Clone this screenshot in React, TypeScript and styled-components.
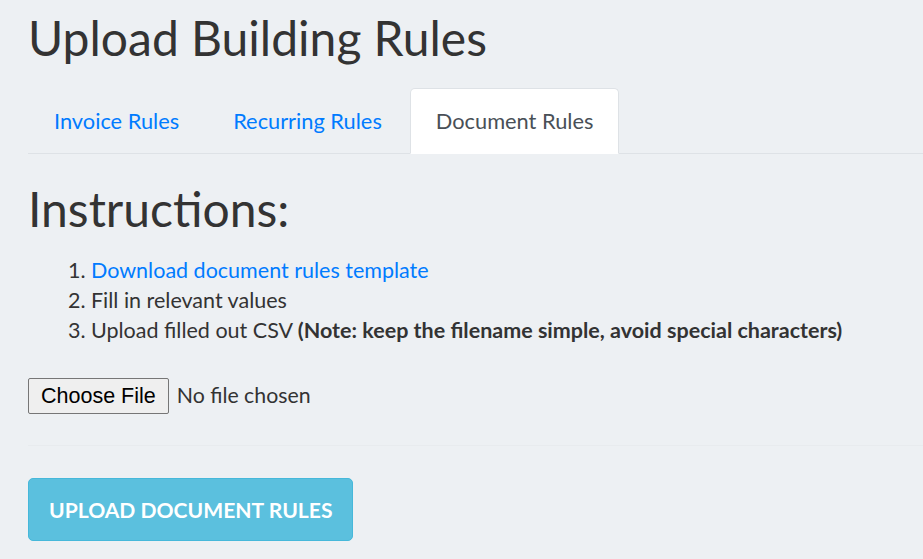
import styled, { createGlobalStyle } from 'styled-components'

const GlobalStyle = createGlobalStyle`
  html, body {
    margin: 0;
    padding: 0;
    background: #edf0f3;
  }
  body {
    font-family: Lato, "Open Sans", sans-serif;
    font-size: 21.5px;
    line-height: 30px;
    color: #333333;
  }
`

const tabs = ['Invoice Rules', 'Recurring Rules', 'Document Rules']

export default function App() {
  return (
    <>
      <GlobalStyle />
      <Page>
        <Title>Upload Building Rules</Title>
        <TabList>
          {tabs.map((label) => (
            <Tab key={label} $active={label === 'Document Rules'}>
              {label}
            </Tab>
          ))}
        </TabList>
        <Panel>
          <Heading>Instructions:</Heading>
          <Steps>
            <li>
              <Link href="#">Download document rules template</Link>
            </li>
            <li>Fill in relevant values</li>
            <li>
              Upload filled out CSV{' '}
              <strong>(Note: keep the filename simple, avoid special characters)</strong>
            </li>
          </Steps>
          <FileInput type="file" />
          <Divider />
          <UploadButton type="button">Upload Document Rules</UploadButton>
        </Panel>
      </Page>
    </>
  )
}

const Page = styled.div`
  padding: 9px 0 0 28px;
`

const Title = styled.h1`
  margin: 0 0 21px;
  font-size: 48px;
  font-weight: 400;
  line-height: 1.2;
  color: #333333;
`

const TabList = styled.div`
  display: flex;
  gap: 2px;
  border-bottom: 1px solid #dee2e6;
`

const Tab = styled.a<{ $active?: boolean }>`
  display: block;
  padding: 17px 25px;
  margin-bottom: -1px;
  border: 1px solid ${(p) => (p.$active ? '#dee2e6' : 'transparent')};
  border-bottom-color: ${(p) => (p.$active ? '#ffffff' : 'transparent')};
  border-radius: 5px 5px 0 0;
  background: ${(p) => (p.$active ? '#ffffff' : 'transparent')};
  color: ${(p) => (p.$active ? '#495057' : '#007bff')};
  font-size: 21.8px;
  line-height: 30px;
  cursor: pointer;
`

const Panel = styled.div`
  padding-top: 26px;
`

const Heading = styled.h2`
  margin: 0 0 18px;
  font-size: 48px;
  font-weight: 400;
  line-height: 1.2;
  color: #333333;
`

const Steps = styled.ol`
  margin: 0 0 33px;
  padding-left: 63px;

  strong {
    font-weight: 700;
  }
`

const Link = styled.a`
  color: #007bff;
  text-decoration: none;
`

const FileInput = styled.input`
  display: block;
  font-family: Lato, sans-serif;
  font-size: 21.3px;
  color: #333333;

  &::file-selector-button {
    height: 36px;
    margin-right: 8px;
    padding: 0 12px;
    font-family: "Liberation Sans", Arial, sans-serif;
    font-size: 21.5px;
    color: #000000;
    background: #efefef;
    border: 1px solid #767676;
    border-radius: 2px;
  }
`

const Divider = styled.hr`
  margin: 31px 0 32px;
  border: 0;
  border-top: 1px solid #e8ebee;
`

const UploadButton = styled.button`
  display: block;
  padding: 16px 20px;
  font-family: Lato, sans-serif;
  font-size: 21.1px;
  font-weight: 700;
  line-height: 29px;
  text-transform: uppercase;
  color: #ffffff;
  background: #5bc0de;
  border: 1px solid #46b8da;
  border-radius: 5px;
  cursor: pointer;
`
